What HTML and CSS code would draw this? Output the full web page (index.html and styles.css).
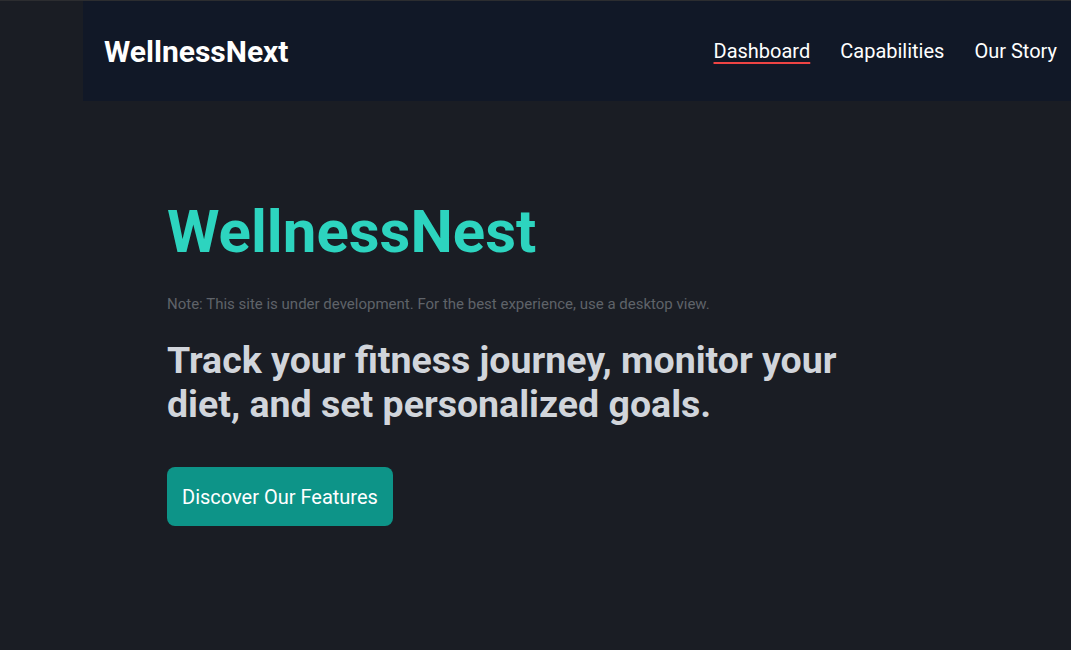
FILE: index.html
```html
<!DOCTYPE html>
<html lang="en">
<head>
<meta charset="utf-8">
<title>WellnessNest</title>
<link rel="stylesheet" href="styles.css">
</head>
<body>
<div class="page">
  <header class="topbar">
    <div class="brand">WellnessNext</div>
    <nav class="nav">
      <a class="nav-link active" href="#">Dashboard</a>
      <a class="nav-link" href="#">Capabilities</a>
      <a class="nav-link" href="#">Our Story</a>
    </nav>
  </header>
  <main class="hero">
    <h1 class="hero-title">WellnessNest</h1>
    <p class="hero-note">Note: This site is under development. For the best experience, use a desktop view.</p>
    <h2 class="hero-sub">Track your fitness journey, monitor your diet, and set personalized goals.</h2>
    <a class="hero-btn" href="#">Discover Our Features</a>
  </main>
</div>
</body>
</html>
```

FILE: styles.css
```css
* { box-sizing: border-box; }
html, body { margin: 0; padding: 0; }
body {
  background: #1a1d24;
  font-family: Roboto, "Liberation Sans", sans-serif;
  color: #fff;
  height: 650px;
  overflow: hidden;
  border-top: 1px solid #2c2d30;
}
.page {
  display: flex;
  flex-direction: column;
}
.topbar {
  margin-left: 83px;
  height: 100px;
  background: #111827;
  display: flex;
  align-items: center;
  justify-content: space-between;
  padding: 0 14px 0 21px;
}
.brand {
  font-size: 30px;
  font-weight: 700;
  color: #fff;
}
.nav {
  display: flex;
  gap: 30px;
}
.nav-link {
  color: #fff;
  text-decoration: none;
  font-size: 20px;
}
.nav-link.active {
  text-decoration: underline;
  text-decoration-color: #ef4444;
  text-decoration-thickness: 2px;
  text-underline-offset: 4px;
}
.hero {
  padding: 95px 0 0 167px;
  display: flex;
  flex-direction: column;
  align-items: flex-start;
}
.hero-title {
  margin: 0;
  font-size: 60px;
  line-height: 72px;
  font-weight: 700;
  color: #2dd4bf;
}
.hero-note {
  margin: 26px 0 0;
  font-size: 15px;
  line-height: 20px;
  color: #5f6369;
}
.hero-sub {
  margin: 24px 0 0;
  max-width: 700px;
  font-size: 37.5px;
  line-height: 44px;
  font-weight: 700;
  color: #d1d5db;
}
.hero-btn {
  margin-top: 41px;
  display: inline-flex;
  align-items: center;
  height: 59px;
  padding: 0 15px;
  background: #0d9488;
  color: #fff;
  border-radius: 8px;
  font-size: 20px;
  text-decoration: none;
}
```
